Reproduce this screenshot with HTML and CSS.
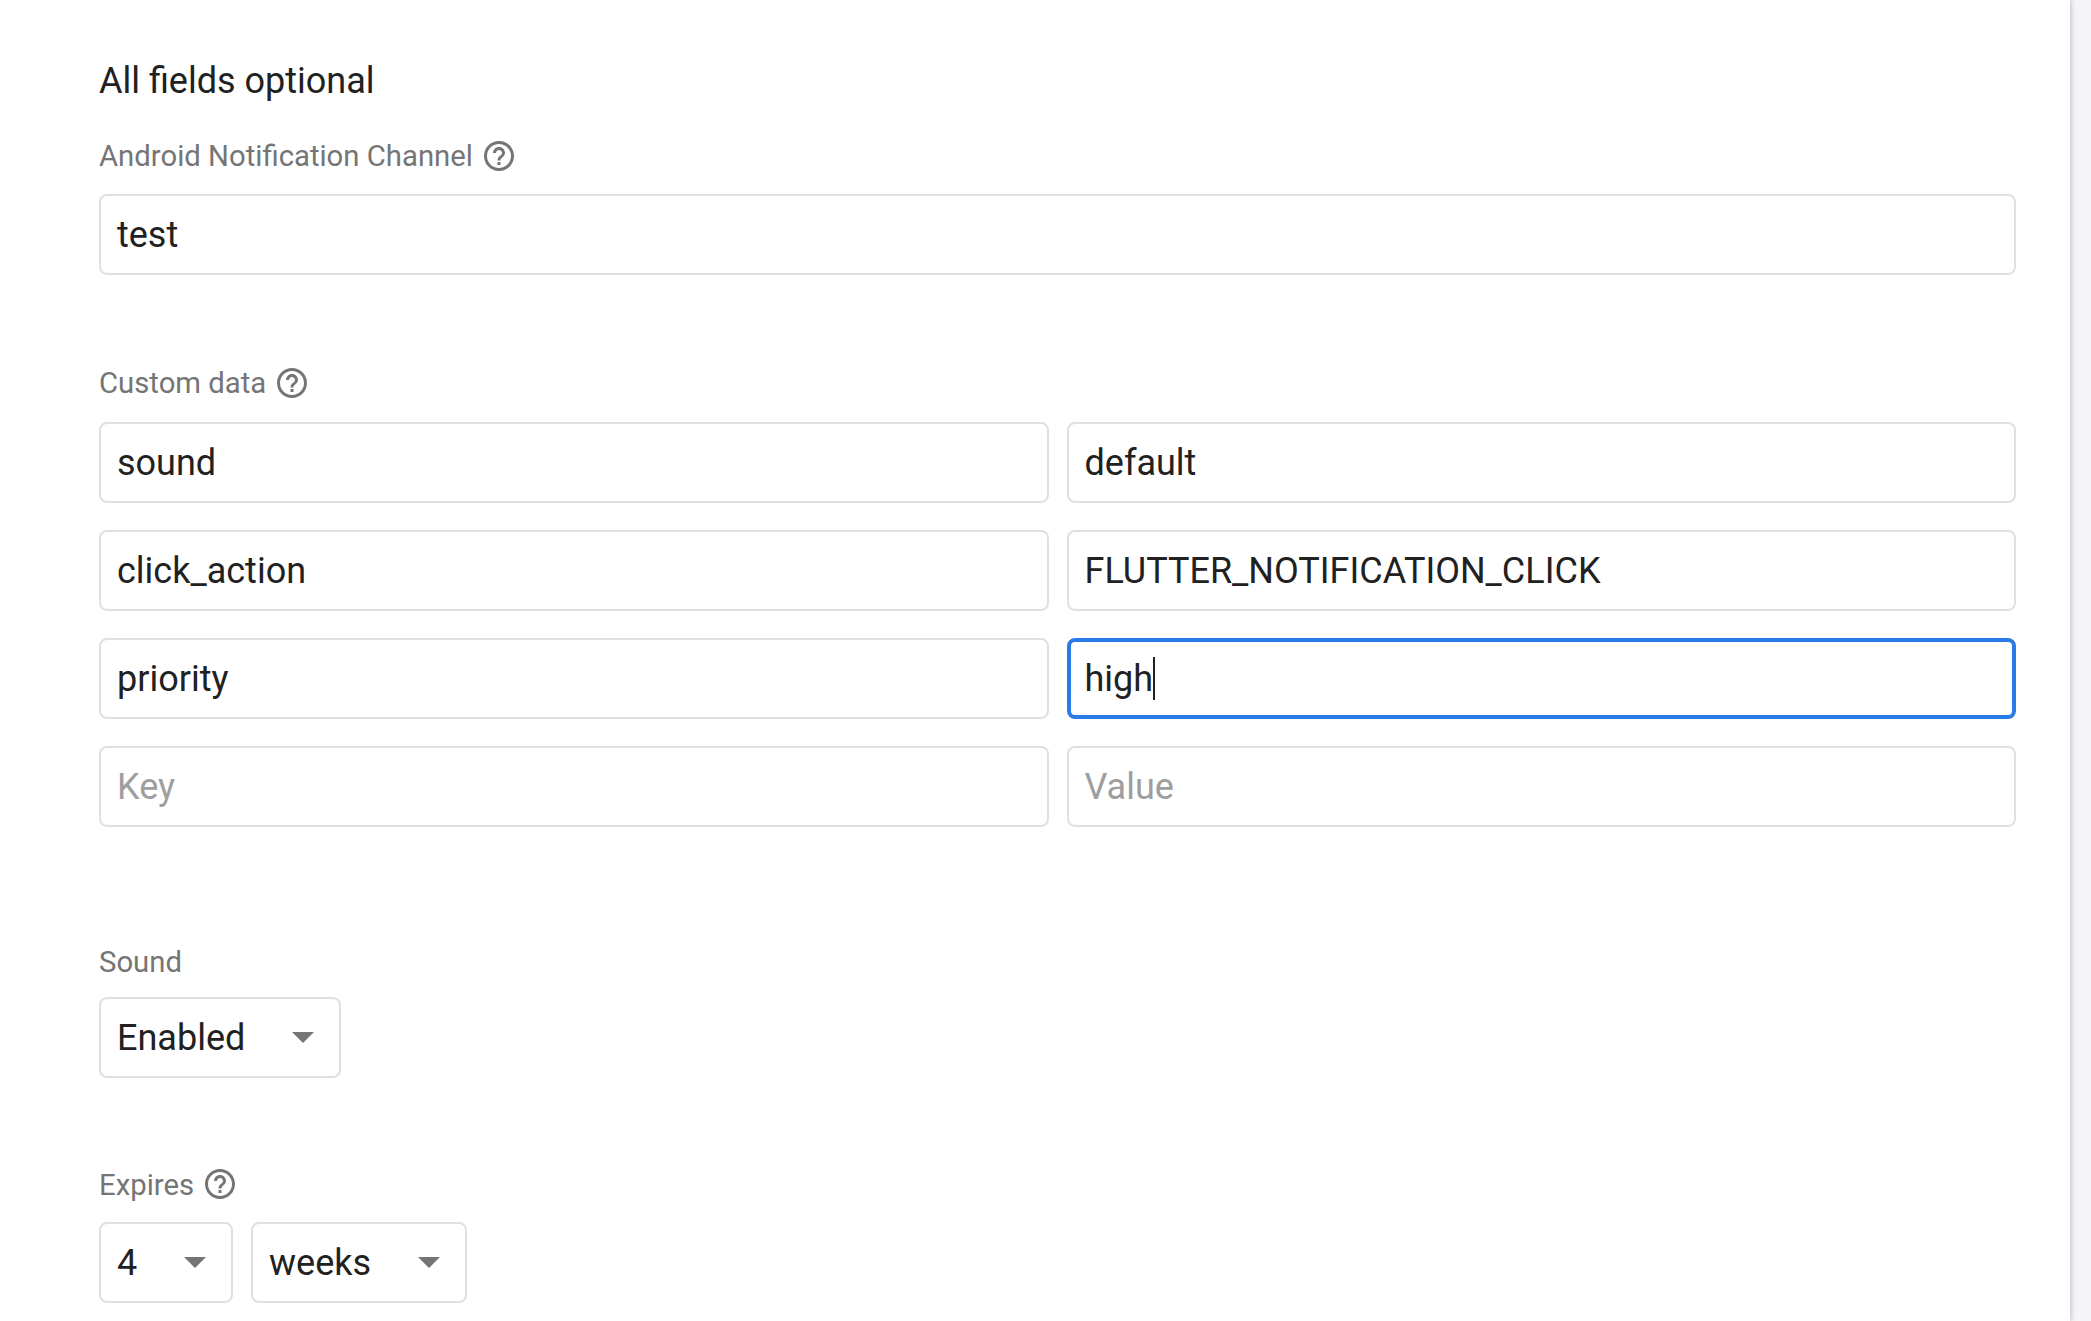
FILE: index.html
```html
<!DOCTYPE html>
<html lang="en">
<head>
<meta charset="utf-8">
<title>All fields optional</title>
<link rel="stylesheet" href="styles.css">
</head>
<body>
<main class="panel">
  <h2 class="heading">All fields optional</h2>

  <section class="channel">
    <div class="label">Android Notification Channel
      <svg class="help" viewBox="0 0 24 24"><path d="M11 18h2v-2h-2v2zm1-16C6.48 2 2 6.48 2 12s4.48 10 10 10 10-4.48 10-10S17.52 2 12 2zm0 18c-4.41 0-8-3.59-8-8s3.59-8 8-8 8 3.59 8 8-3.59 8-8 8zm0-14c-2.21 0-4 1.79-4 4h2c0-1.1.9-2 2-2s2 .9 2 2c0 2-3 1.75-3 5h2c0-2.25 3-2.5 3-5 0-2.21-1.79-4-4-4z"/></svg>
    </div>
    <div class="field">test</div>
  </section>

  <section class="custom">
    <div class="label">Custom data
      <svg class="help" viewBox="0 0 24 24"><path d="M11 18h2v-2h-2v2zm1-16C6.48 2 2 6.48 2 12s4.48 10 10 10 10-4.48 10-10S17.52 2 12 2zm0 18c-4.41 0-8-3.59-8-8s3.59-8 8-8 8 3.59 8 8-3.59 8-8 8zm0-14c-2.21 0-4 1.79-4 4h2c0-1.1.9-2 2-2s2 .9 2 2c0 2-3 1.75-3 5h2c0-2.25 3-2.5 3-5 0-2.21-1.79-4-4-4z"/></svg>
    </div>
    <div class="pairs">
      <div class="field">sound</div>
      <div class="field">default</div>
      <div class="field">click_action</div>
      <div class="field">FLUTTER_NOTIFICATION_CLICK</div>
      <div class="field">priority</div>
      <div class="field focused">high<span class="caret"></span></div>
      <div class="field placeholder">Key</div>
      <div class="field placeholder">Value</div>
    </div>
  </section>

  <section class="sound">
    <div class="label">Sound</div>
    <div class="selects">
      <div class="select w-enabled"><span>Enabled</span><i class="arrow"></i></div>
    </div>
  </section>

  <section class="expires">
    <div class="label">Expires
      <svg class="help" viewBox="0 0 24 24"><path d="M11 18h2v-2h-2v2zm1-16C6.48 2 2 6.48 2 12s4.48 10 10 10 10-4.48 10-10S17.52 2 12 2zm0 18c-4.41 0-8-3.59-8-8s3.59-8 8-8 8 3.59 8 8-3.59 8-8 8zm0-14c-2.21 0-4 1.79-4 4h2c0-1.1.9-2 2-2s2 .9 2 2c0 2-3 1.75-3 5h2c0-2.25 3-2.5 3-5 0-2.21-1.79-4-4-4z"/></svg>
    </div>
    <div class="selects">
      <div class="select w-num"><span>4</span><i class="arrow"></i></div>
      <div class="select w-unit"><span>weeks</span><i class="arrow"></i></div>
    </div>
  </section>
</main>
</body>
</html>
```

FILE: styles.css
```css
* { box-sizing: border-box; }
html, body { margin: 0; height: 100%; }
body {
  background: #f5f5f7;
  font-family: Roboto, "Liberation Sans", sans-serif;
  color: #212121;
  overflow: hidden;
}
.panel {
  width: 2070px;
  height: 1321px;
  background: #fff;
  padding: 60px 54px 0 99px;
  box-shadow: 1px 0 5px rgba(60, 64, 90, .3);
  overflow: hidden;
}
.heading {
  margin: 0;
  font-size: 36px;
  font-weight: 400;
  line-height: 42px;
}
.label {
  display: flex;
  align-items: center;
  gap: 8px;
  font-size: 29.3px;
  line-height: 34px;
  color: #757575;
  height: 34px;
}
.help { width: 36px; height: 36px; fill: #757575; flex: none; }
.channel { margin-top: 37px; }
.channel .field { margin-top: 21px; }
.custom { margin-top: 91px; }
.pairs {
  margin-top: 22px;
  display: grid;
  grid-template-columns: 1fr 1fr;
  column-gap: 18px;
  row-gap: 27px;
}
.field {
  height: 81px;
  border: 2px solid #e0e0e0;
  border-radius: 8px;
  padding: 0 16px;
  display: flex;
  align-items: center;
  font-size: 36px;
  background: #fff;
}
.focused { border: 4px solid #2a7ae8; padding: 0 14px; }
.placeholder { color: #9e9e9e; }
.caret { width: 2px; height: 43px; background: #212121; }
.sound { margin-top: 118px; }
.sound .selects { margin-top: 18px; }
.expires { margin-top: 90px; }
.expires .help { margin-top: -2px; }
.expires .selects { margin-top: 20px; }
.selects { display: flex; gap: 18px; }
.select {
  height: 81px;
  border: 2px solid #e0e0e0;
  border-radius: 8px;
  padding: 0 25px 0 16px;
  display: flex;
  align-items: center;
  justify-content: space-between;
  font-size: 36px;
}
.w-enabled { width: 242px; }
.w-num { width: 134px; }
.w-unit { width: 216px; }
.arrow {
  width: 0;
  height: 0;
  border-left: 11.5px solid transparent;
  border-right: 11.5px solid transparent;
  border-top: 11.5px solid #757575;
}
```
